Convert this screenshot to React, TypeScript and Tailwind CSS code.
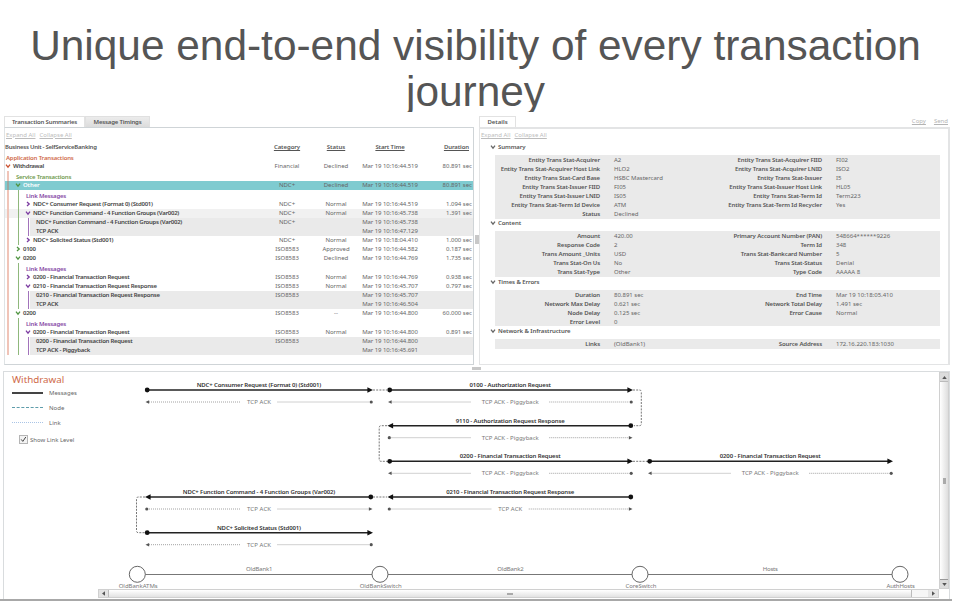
import React from 'react';

interface TreeRow {
  kind: 'app' | 'service' | 'link' | 'item' | 'child';
  name: string;
  level: number;
  open?: boolean;
  selected?: boolean;
  shaded?: boolean;
  category?: string;
  status?: string;
  start?: string;
  duration?: string;
}

const ROWS: TreeRow[] = [
  { kind: 'app', name: 'Withdrawal', level: 0, open: true, category: 'Financial', status: 'Declined', start: 'Mar 19 10:16:44.519', duration: '80.891 sec' },
  { kind: 'service', name: 'Service Transactions', level: 1 },
  { kind: 'item', name: 'Other', level: 1, open: true, selected: true, category: 'NDC+', status: 'Declined', start: 'Mar 19 10:16:44.519', duration: '80.891 sec' },
  { kind: 'link', name: 'Link Messages', level: 2 },
  { kind: 'item', name: 'NDC+ Consumer Request (Format 0) (Std001)', level: 2, category: 'NDC+', status: 'Normal', start: 'Mar 19 10:16:44.519', duration: '1.094 sec' },
  { kind: 'item', name: 'NDC+ Function Command - 4 Function Groups (Var002)', level: 2, open: true, shaded: true, category: 'NDC+', status: 'Normal', start: 'Mar 19 10:16:45.738', duration: '1.391 sec' },
  { kind: 'child', name: 'NDC+ Function Command - 4 Function Groups (Var002)', level: 3, category: 'NDC+', start: 'Mar 19 10:16:45.738' },
  { kind: 'child', name: 'TCP ACK', level: 3, start: 'Mar 19 10:16:47.129' },
  { kind: 'item', name: 'NDC+ Solicited Status (Std001)', level: 2, category: 'NDC+', status: 'Normal', start: 'Mar 19 10:18:04.410', duration: '1.000 sec' },
  { kind: 'item', name: '0100', level: 1, category: 'ISO8583', status: 'Approved', start: 'Mar 19 10:16:44.582', duration: '0.187 sec' },
  { kind: 'item', name: '0200', level: 1, open: true, category: 'ISO8583', status: 'Declined', start: 'Mar 19 10:16:44.769', duration: '1.735 sec' },
  { kind: 'link', name: 'Link Messages', level: 2 },
  { kind: 'item', name: '0200 - Financial Transaction Request', level: 2, category: 'ISO8583', status: 'Normal', start: 'Mar 19 10:16:44.769', duration: '0.938 sec' },
  { kind: 'item', name: '0210 - Financial Transaction Request Response', level: 2, open: true, category: 'ISO8583', status: 'Normal', start: 'Mar 19 10:16:45.707', duration: '0.797 sec' },
  { kind: 'child', name: '0210 - Financial Transaction Request Response', level: 3, category: 'ISO8583', start: 'Mar 19 10:16:45.707' },
  { kind: 'child', name: 'TCP ACK', level: 3, start: 'Mar 19 10:16:46.504' },
  { kind: 'item', name: '0200', level: 1, open: true, category: 'ISO8583', status: '--', start: 'Mar 19 10:16:44.800', duration: '60.000 sec' },
  { kind: 'link', name: 'Link Messages', level: 2 },
  { kind: 'item', name: '0200 - Financial Transaction Request', level: 2, open: true, category: 'ISO8583', status: 'Normal', start: 'Mar 19 10:16:44.800', duration: '0.891 sec' },
  { kind: 'child', name: '0200 - Financial Transaction Request', level: 3, category: 'ISO8583', start: 'Mar 19 10:16:44.800' },
  { kind: 'child', name: 'TCP ACK - Piggyback', level: 3, start: 'Mar 19 10:16:45.691' },
];

interface Section {
  title: string;
  head: string;
  body: string;
  left: [string, string][];
  right: [string, string][];
}

const SECTIONS: Section[] = [
  {
    title: 'Summary',
    head: 'h-[15px] pb-1',
    body: 'h-16 pt-px',
    left: [
      ['Entity Trans Stat-Acquirer', 'A2'],
      ['Entity Trans Stat-Acquirer Host Link', 'HLO2'],
      ['Entity Trans Stat-Card Base', 'HSBC Mastercard'],
      ['Entity Trans Stat-Issuer FIID', 'FI05'],
      ['Entity Trans Stat-Issuer LNID', 'IS05'],
      ['Entity Trans Stat-Term Id Device', 'ATM'],
      ['Status', 'Declined'],
    ],
    right: [
      ['Entity Trans Stat-Acquirer FIID', 'FI02'],
      ['Entity Trans Stat-Acquirer LNID', 'ISO2'],
      ['Entity Trans Stat-Issuer', 'I5'],
      ['Entity Trans Stat-Issuer Host Link', 'HL05'],
      ['Entity Trans Stat-Term Id', 'Term223'],
      ['Entity Trans Stat-Term Id Recycler', 'Yes'],
    ],
  },
  {
    title: 'Content',
    head: 'h-3 pb-1',
    body: 'h-[46px] pt-px',
    left: [
      ['Amount', '420.00'],
      ['Response Code', '2'],
      ['Trans Amount _Units', 'USD'],
      ['Trans Stat-On Us', 'No'],
      ['Trans Stat-Type', 'Other'],
    ],
    right: [
      ['Primary Account Number (PAN)', '548664******9226'],
      ['Term Id', '348'],
      ['Trans Stat-Bankcard Number', '5'],
      ['Trans Stat-Status', 'Denial'],
      ['Type Code', 'AAAAA 8'],
    ],
  },
  {
    title: 'Times & Errors',
    head: 'h-[13px] pb-1',
    body: 'h-9 pt-px',
    left: [
      ['Duration', '80.891 sec'],
      ['Network Max Delay', '0.621 sec'],
      ['Node Delay', '0.125 sec'],
      ['Error Level', '0'],
    ],
    right: [
      ['End Time', 'Mar 19 10:18:05.410'],
      ['Network Total Delay', '1.491 sec'],
      ['Error Cause', 'Normal'],
    ],
  },
  {
    title: 'Network & Infrastructure',
    head: 'h-[13px] pb-1',
    body: 'h-2.5 pt-px',
    left: [['Links', '(OldBank1)']],
    right: [['Source Address', '172.16.220.183:1030']],
  },
];

interface Message {
  label: string;
  width: number;
  ack: string;
  x1: number;
  x2: number;
  y: number;
  back?: boolean;
}

const MESSAGES: Message[] = [
  { label: 'NDC+ Consumer Request (Format 0) (Std001)', width: 124.5, ack: 'TCP ACK', x1: 145, x2: 373, y: 390 },
  { label: '0100 - Authorization Request', width: 81.5, ack: 'TCP ACK - Piggyback', x1: 387.5, x2: 633, y: 390 },
  { label: '9110 - Authorization Request Response', width: 109, ack: 'TCP ACK - Piggyback', x1: 387.5, x2: 633, y: 425.7, back: true },
  { label: '0200 - Financial Transaction Request', width: 101, ack: 'TCP ACK - Piggyback', x1: 387.5, x2: 633, y: 461.3 },
  { label: '0200 - Financial Transaction Request', width: 101, ack: 'TCP ACK - Piggyback', x1: 647.5, x2: 893, y: 461.3 },
  { label: 'NDC+ Function Command - 4 Function Groups (Var002)', width: 152.5, ack: 'TCP ACK', x1: 145, x2: 373, y: 497, back: true },
  { label: '0210 - Financial Transaction Request Response', width: 128, ack: 'TCP ACK', x1: 387.5, x2: 633, y: 497, back: true },
  { label: 'NDC+ Solicited Status (Std001)', width: 84, ack: 'TCP ACK', x1: 145, x2: 373, y: 532.7 },
];

const CONNECTORS = [
  'M373 390H387',
  'M633 461.3H648',
  'M373 497H387',
  'M633 390H639.5Q641.3 390 641.3 392V423.7Q641.3 425.7 639.5 425.7H634',
  'M387 425.7H381Q379.2 425.7 379.2 427.7V459.3Q379.2 461.3 381 461.3H387',
  'M145 497H138.3Q136.5 497 136.5 499V530.7Q136.5 532.7 138.3 532.7H145',
];

const NODES = [
  { name: 'OldBankATMs', x: 137.3, label: 138.2, width: 39 },
  { name: 'OldBankSwitch', x: 380, label: 380.7, width: 42 },
  { name: 'CoreSwitch', x: 640, label: 641, width: 31 },
  { name: 'AuthHosts', x: 900, label: 900.7, width: 28.5 },
];

const LINKS = [
  { name: 'OldBank1', x: 259.3, width: 26.5 },
  { name: 'OldBank2', x: 510.5, width: 26.5 },
  { name: 'Hosts', x: 770.3, width: 15 },
];

const Chevron: React.FC<{ open?: boolean; className: string }> = ({ open, className }) => (
  <svg viewBox="0 0 6 6" className={`size-1.5 shrink-0 ${className}`} fill="none" stroke="currentColor" strokeWidth="1.3">
    <path d={open ? 'M1 1.7L3 4.2L5 1.7' : 'M2 1L4.2 3L2 5'} />
  </svg>
);

const TreeLine: React.FC<{ row: TreeRow }> = ({ row }) => {
  const heading = row.kind === 'service' || row.kind === 'link';
  let nameColor = 'text-[#444] tracking-[-0.26px]';
  if (row.kind === 'service') nameColor = 'text-[#6f9a4c] tracking-[-0.22px]';
  if (row.kind === 'link') nameColor = 'text-[#8647a5] tracking-[-0.2px]';
  if (row.selected) nameColor = 'text-white tracking-[-0.1px]';
  const chevronColor = row.level === 0 ? 'text-[#c9512f]' : row.level === 1 ? 'text-[#4f9440]' : 'text-[#7b3aa0]';

  return (
    <div className={`flex ${heading ? 'h-2.5' : 'h-[9px]'} ${row.selected ? 'bg-[#7fcbd0]' : row.shaded ? 'bg-[#f1f1f1]' : ''}`}>
      {row.level > 0 && (
        <div className="w-2.5 shrink-0 pl-[2px]">
          <div className={`h-full w-0.5 ${row.selected ? 'bg-[#9aa8a2]' : 'bg-[#f0c4b8]'}`} />
        </div>
      )}
      {row.level > 1 && (
        <div className="w-2.5 shrink-0 pl-[3px]">
          <div className="h-full w-px bg-[#8fb87c]" />
        </div>
      )}
      {row.level > 2 && (
        <div className="w-[5px] shrink-0 pl-[3px]">
          <div className="h-full w-px bg-[#a273bb]" />
        </div>
      )}
      <div className={`flex min-w-0 flex-1 items-center pr-px pb-px ${row.kind === 'child' ? 'bg-[#eaeaea]' : ''}`}>
        <div className={`flex min-w-0 flex-1 items-center gap-0.5 font-semibold ${nameColor}`}>
          {!heading && row.kind !== 'child' && <Chevron open={row.open} className={chevronColor} />}
          <span className={heading ? 'pt-[3px] pl-px' : row.kind === 'child' ? 'pl-1.5' : ''}>{row.name}</span>
        </div>
        <span className="w-[50px] text-center">{row.category}</span>
        <span className="w-12 text-center">{row.status}</span>
        <span className="w-[60px] text-center tracking-[-0.07px]">{row.start}</span>
        <span className="w-[52px] text-right">{row.duration}</span>
      </div>
    </div>
  );
};

const Links: React.FC = () => (
  <div className="flex gap-1 text-[#bcbcbc]">
    <a className="underline">Expand All</a>
    <a className="underline">Collapse All</a>
  </div>
);

const SummaryPanel: React.FC = () => (
  <div className="flex w-[470px] flex-col">
    <div className="flex h-3 items-end font-semibold tracking-[-0.16px] text-[#555]">
      <div className="flex h-[11px] w-[81px] items-center justify-center border border-b-0 border-[#e2e2e2] bg-white">Transaction Summaries</div>
      <div className="flex h-[11px] w-[65px] items-center justify-center border border-b-0 border-[#e0e0e0] bg-linear-to-b from-[#ececec] to-[#dcdcdc] pb-px">Message Timings</div>
    </div>
    <div className="h-[238px] border border-[#cfd4d7] border-l-[#dfe3e5]">
      <div className="flex h-[15px] items-center pb-0.5 pl-px">
        <Links />
      </div>
      <div className="flex h-[9px] items-center pr-px pb-px font-semibold text-[#555]">
        <span className="flex-1 tracking-[-0.26px]">Business Unit - SelfServiceBanking</span>
        <span className="w-[50px] text-center tracking-[-0.05px] underline">Category</span>
        <span className="w-12 text-center underline">Status</span>
        <span className="w-[60px] text-center tracking-[-0.1px] underline">Start Time</span>
        <span className="w-[52px] pr-[3px] text-right tracking-[-0.1px] underline">Duration</span>
      </div>
      <div className="flex h-[10px] items-end pl-px font-semibold tracking-[-0.17px] text-[#cf6a4a]">Application Transactions</div>
      {ROWS.map((row, i) => (
        <TreeLine key={i} row={row} />
      ))}
    </div>
  </div>
);

const Pairs: React.FC<{ pairs: [string, string][]; labelWidth: string }> = ({ pairs, labelWidth }) => (
  <div>
    {pairs.map(([label, value]) => (
      <div key={label} className="flex h-[9px] items-center pb-px">
        <span className={`${labelWidth} text-right font-semibold tracking-[-0.12px] text-[#555]`}>{label}</span>
        <span className="pl-3.5 text-[#666]">{value}</span>
      </div>
    ))}
  </div>
);

const DetailsPanel: React.FC = () => (
  <div className="flex w-[471px] flex-col">
    <div className="flex h-3 items-end justify-between">
      <div className="flex h-[11px] w-[37px] items-center justify-center border border-b-0 border-[#e2e2e2] font-semibold text-[#555]">Details</div>
      <div className="flex gap-2 pr-0.5 pb-0.5 text-[#b4b4b4]">
        <a className="underline">Copy</a>
        <a className="underline">Send</a>
      </div>
    </div>
    <div className="h-[238px] border border-t-2 border-r-2 border-[#e3e4e5]">
      <div className="flex h-[11px] items-end pb-px pl-px">
        <Links />
      </div>
      <div className="pr-2 pl-[15px]">
        {SECTIONS.map((s) => (
          <div key={s.title}>
            <div className={`-ml-[5px] flex items-end gap-0.5 font-semibold tracking-[-0.08px] text-[#555] ${s.head}`}>
              <Chevron open className="mb-px text-[#666]" />
              {s.title}
            </div>
            <div className={`grid grid-cols-2 bg-[#eaeaea] ${s.body}`}>
              <Pairs pairs={s.left} labelWidth="w-[105px]" />
              <Pairs pairs={s.right} labelWidth="w-[104.5px]" />
            </div>
          </div>
        ))}
      </div>
    </div>
  </div>
);

const Head: React.FC<{ x: number; y: number; right?: boolean; size: number }> = ({ x, y, right, size }) => {
  const back = right ? x - size * 2 : x + size * 2;
  return <path d={`M${x} ${y}L${back} ${y - size}V${y + size}Z`} />;
};

const Arrow: React.FC<{ m: Message }> = ({ m }) => {
  const mid = (m.x1 + m.x2) / 2;
  const ackY = m.y + 12;
  const wide = m.ack !== 'TCP ACK';
  const gap = wide ? 39 : 18.5;
  const dot = m.back ? m.x2 - 2.2 : m.x1 + 2.2;
  const ackDot = m.back ? m.x1 + 1.8 : m.x2 - 1.8;
  return (
    <g>
      <path d={`M${m.x1 + 2} ${m.y}H${m.x2 - 2}`} stroke="#222" strokeWidth="1.4" />
      <circle cx={dot} cy={m.y} r="2.4" fill="#111" />
      <g fill="#111">
        <Head x={m.back ? m.x1 : m.x2} y={m.y} right={!m.back} size={2.8} />
      </g>
      <text x={mid} y={m.y - 3} textAnchor="middle" textLength={m.width} fill="#333" className="font-semibold">{m.label}</text>
      <path d={`M${m.x1 + 4} ${ackY}H${mid - gap}M${mid + gap} ${ackY}H${m.x2 - 4}`} stroke="#8a8a8a" strokeWidth="0.8" strokeDasharray="1 1" />
      <circle cx={ackDot} cy={ackY} r="1.6" fill="#555" />
      <g fill="#555">
        <Head x={m.back ? m.x2 - 0.5 : m.x1 + 0.5} y={ackY} right={m.back} size={1.8} />
      </g>
      <text x={mid} y={ackY + 2} textAnchor="middle" textLength={wide ? 57 : 24} fill="#777">{m.ack}</text>
    </g>
  );
};

const Diagram: React.FC = () => (
  <svg viewBox="98 372 841 217" width="841" height="217" className="shrink-0" fontSize="6">
    <g fill="none" stroke="#777" strokeWidth="1" strokeDasharray="2 1.2">
      {CONNECTORS.map((d) => (
        <path key={d} d={d} />
      ))}
    </g>
    {MESSAGES.map((m, i) => (
      <Arrow key={i} m={m} />
    ))}
    <path d="M137 574.5H900" stroke="#777" strokeWidth="1" />
    {LINKS.map((l) => (
      <text key={l.name} x={l.x} y="571" textAnchor="middle" textLength={l.width} fill="#777">{l.name}</text>
    ))}
    {NODES.map((n) => (
      <g key={n.name}>
        <circle cx={n.x} cy="574.3" r="8" fill="#fff" stroke="#666" strokeWidth="1" />
        <text x={n.label} y="588.4" textAnchor="middle" textLength={n.width} fill="#777">{n.name}</text>
      </g>
    ))}
  </svg>
);

const Legend: React.FC = () => (
  <div className="w-[94px] shrink-0 pl-2 text-[#666]">
    <h2 className="h-[13px] pt-px text-[9.8px] leading-[13px] text-[#cf6a4a]">Withdrawal</h2>
    <div className="flex h-[15px] items-center gap-[6px]">
      <span className="w-[31px] border-t-2 border-[#444]" />
      <span>Messages</span>
    </div>
    <div className="flex h-[15px] items-center gap-[6px]">
      <span className="w-[31px] border-t border-dashed border-[#5f9dab]" />
      <span>Node</span>
    </div>
    <div className="flex h-[15px] items-center gap-[6px]">
      <span className="w-[31px] border-t border-dotted border-[#a9c4e6]" />
      <span>Link</span>
    </div>
    <div className="flex h-[19px] items-center gap-0.5 pl-[7px]">
      <span className="flex size-[9px] items-center justify-center border border-[#b5b5b5] bg-[#f3f3f3]">
        <svg viewBox="0 0 7 7" className="size-[7px]" fill="none" stroke="#444" strokeWidth="1">
          <path d="M1.2 3.4L2.8 5.4L5.8 1" />
        </svg>
      </span>
      <span>Show Link Level</span>
    </div>
  </div>
);

export default function App() {
  return (
    <div className="flex h-[601px] w-[960px] flex-col overflow-hidden bg-white font-['Noto_Sans','Open_Sans',sans-serif] text-[6px] leading-[8px] whitespace-nowrap text-[#666]">
      <h1 className="h-28 shrink-0 pt-[23px] pr-[9px] text-center font-['Liberation_Sans',Arial,sans-serif] text-[42.4px] leading-[46px] text-[#555]">
        Unique end-to-end visibility of every transaction
        <br />
        journey
      </h1>
      <div className="relative flex h-[254px] shrink-0 bg-white pt-[3px] pl-1">
        <SummaryPanel />
        <div className="flex w-[5px] items-center justify-center pb-0.5">
          <div className="h-[9px] w-1 bg-[#c8c8c8]" />
        </div>
        <DetailsPanel />
      </div>
      <div className="flex h-[5px] shrink-0 justify-center pr-[7px]">
        <div className="mt-px h-[3px] w-[9px] bg-[#c8c8c8]" />
      </div>
      <div className="ml-[3px] flex h-[228px] w-[947px] shrink-0 border border-b-0 border-[#d9dcde]">
        <Legend />
        <div className="flex w-[841px] flex-col">
          <Diagram />
          <div className="flex h-[9px] items-center border border-[#d0d0d0] bg-[#f4f4f4]">
            <div className="flex h-full w-2.5 items-center justify-center border-r border-[#bbb] bg-[#e3e3e3]">
              <svg viewBox="0 0 4 6" className="h-[5px] w-[3px]" fill="#555"><path d="M4 0V6L0 3Z" /></svg>
            </div>
            <div className="flex h-full flex-1 items-center justify-center bg-linear-to-b from-white to-[#e2e2e2]">
              <div className="h-0.5 w-1.5 bg-[#aaa]" />
            </div>
            <div className="h-full w-[17px] border-l border-[#bbb] bg-[#f6f6f6]" />
            <div className="flex h-full w-2.5 items-center justify-center bg-[#e6e6e6]">
              <svg viewBox="0 0 4 6" className="h-[5px] w-[3px]" fill="#555"><path d="M0 0V6L4 3Z" /></svg>
            </div>
          </div>
        </div>
        <div className="flex h-[217px] w-2.5 flex-col border border-[#d0d0d0] bg-[#f4f4f4]">
          <div className="flex h-[9px] items-center justify-center border-b border-[#bbb] bg-[#dcdcdc]">
            <svg viewBox="0 0 6 4" className="h-[3px] w-[5px]" fill="#555"><path d="M0 4H6L3 0Z" /></svg>
          </div>
          <div className="flex flex-1 items-center justify-center bg-linear-to-r from-white to-[#dedede]">
            <div className="h-1.5 w-[3px] bg-[#aaa]" />
          </div>
          <div className="flex h-[9px] items-center justify-center border-t border-[#999] bg-[#dcdcdc]">
            <svg viewBox="0 0 6 4" className="h-[3px] w-[5px]" fill="#555"><path d="M0 0H6L3 4Z" /></svg>
          </div>
        </div>
      </div>
      <div className="h-0.5 w-[952px] shrink-0 bg-[#a8a8a8]" />
    </div>
  );
}
